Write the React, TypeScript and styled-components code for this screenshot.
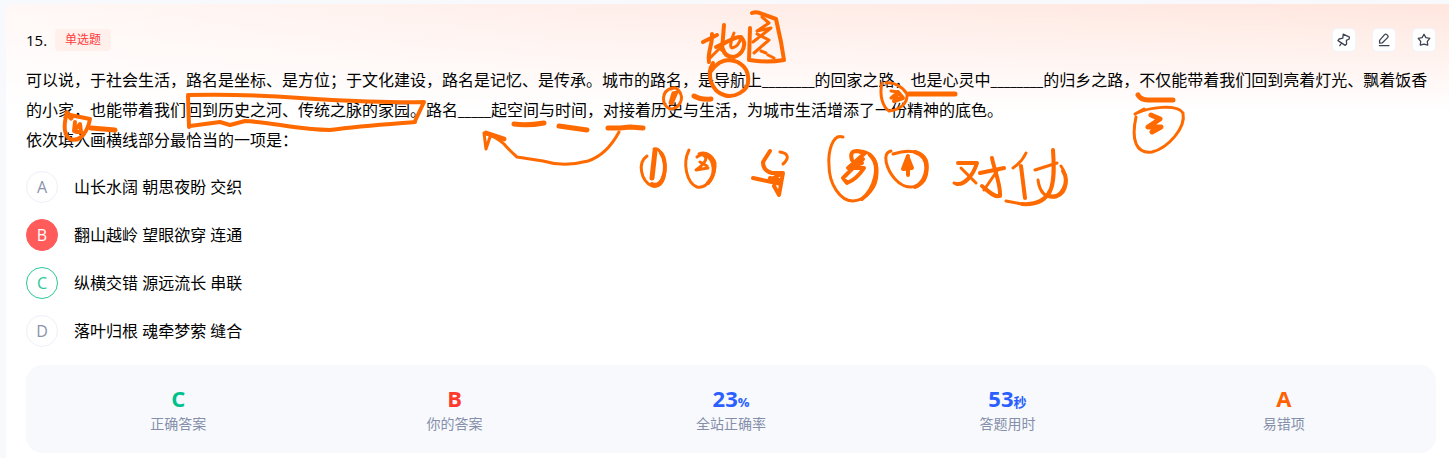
import React from "react";
import styled, { createGlobalStyle } from "styled-components";

const GlobalStyle = createGlobalStyle`
  * { box-sizing: border-box; }
  body {
    margin: 0;
    background: #f7f9fd;
    color: #000;
    font-family: "Open Sans", "Noto Sans CJK SC", sans-serif;
    font-size: 16px;
  }
`;

const Page = styled.div`
  position: relative;
  padding: 4px 0 0 6px;
`;

const Card = styled.main`
  min-height: calc(100vh - 4px);
  padding: 24px 13px 5px 20px;
  border-radius: 8px 0 0 0;
  background:
    linear-gradient(to bottom, rgba(255, 255, 255, 0) 0, #fff 108px),
    linear-gradient(to right, #fff8f6 0, #ffeeea 40%, #ffe6de 100%);
`;

const Header = styled.header`
  display: flex;
  align-items: center;
  height: 24px;
`;

const QuestionNumber = styled.span`
  font-size: 15px;
  line-height: 22px;
`;

const TypeTag = styled.span`
  margin-left: 8px;
  padding: 0 10px;
  border-radius: 4px;
  background: #fff0ec;
  color: #ff3b3b;
  font-size: 12px;
  line-height: 22px;
`;

const Tools = styled.div`
  display: flex;
  gap: 16px;
  margin-left: auto;
`;

const ToolButton = styled.button`
  display: grid;
  place-items: center;
  width: 24px;
  height: 24px;
  padding: 0;
  border: 1px solid #f1f3fb;
  border-radius: 5px;
  background: #fff;
  color: #3c4454;
  cursor: pointer;
`;

const Stem = styled.p`
  margin: 13px 0 16px;
  line-height: 30px;
`;

const Blank = styled.span`
  font-size: 15px;
  line-height: 1;
`;

const Options = styled.fieldset`
  display: flex;
  flex-direction: column;
  gap: 16px;
  margin: 0;
  padding: 0;
  border: 0;
`;

const Option = styled.label`
  display: flex;
  align-items: center;
  gap: 16px;
  height: 32px;
  cursor: pointer;
`;

const Radio = styled.input`
  position: absolute;
  opacity: 0;
  pointer-events: none;
`;

type OptionState = "idle" | "wrong" | "right";

const badgeColors = {
  idle: { line: "#edf0f8", fill: "#fff", text: "#8a93ad" },
  wrong: { line: "#ff5b5b", fill: "#ff5b5b", text: "#fff" },
  right: { line: "#2cc79b", fill: "#fff", text: "#2cc79b" },
};

const Badge = styled.span<{ $state: OptionState }>`
  display: grid;
  place-items: center;
  width: 32px;
  height: 32px;
  border: 1px solid ${(p) => badgeColors[p.$state].line};
  border-radius: 50%;
  background: ${(p) => badgeColors[p.$state].fill};
  color: ${(p) => badgeColors[p.$state].text};
  font-size: 16px;
  line-height: 30px;
`;

const OptionText = styled.span`
  line-height: 30px;
`;

const Stats = styled.dl`
  display: flex;
  margin: 18px 0 0;
  padding: 19px 14px 17px;
  border-radius: 16px;
  background: #f7f9fd;
`;

const Stat = styled.div`
  display: flex;
  flex: 1;
  flex-direction: column-reverse;
  align-items: center;
`;

const StatLabel = styled.dt`
  color: #868fa9;
  font-size: 14px;
  line-height: 24px;
`;

const StatValue = styled.dd<{ $color: string }>`
  margin: 0;
  color: ${(p) => p.$color};
  font-size: 22px;
  font-weight: 700;
  line-height: 28px;
`;

const Unit = styled.small`
  font-size: 13px;
  line-height: 1;
`;

const InkLayer = styled.svg`
  position: absolute;
  top: 0;
  left: 0;
  width: 100%;
  height: 100%;
  overflow: hidden;
  pointer-events: none;
  fill: none;
  stroke: #ff6a00;
  stroke-linecap: round;
  stroke-linejoin: round;
`;

const PinIcon = () => (
  <svg width="14" height="14" viewBox="0 0 14 14" fill="none" stroke="currentColor" strokeWidth="1.3" strokeLinejoin="round" strokeLinecap="round">
    <path d="M6.2 1.2 12.4 4.2 12.2 6 9.4 7.4 9.6 11 8.2 12.4 1 7.6 2 6 5.8 5.2Z M4.6 10 2.8 12.6" />
  </svg>
);

const EditIcon = () => (
  <svg width="14" height="14" viewBox="0 0 14 14" fill="none" stroke="currentColor" strokeWidth="1.3" strokeLinejoin="round" strokeLinecap="round">
    <path d="M2.6 7.4 7.6 1.6Q8.6.6 9.8 1.6L10.6 2.4Q11.6 3.4 10.6 4.6L5.4 9.8 2.6 10.2Z M2.4 12.6H12" />
  </svg>
);

const StarIcon = () => (
  <svg width="14" height="14" viewBox="0 0 14 14" fill="none" stroke="currentColor" strokeWidth="1.3" strokeLinejoin="round">
    <path d="M7 1.2 8.9 4.6 12.8 5.4 10.3 8.3 10.7 12.2 7 11.2 3.3 12.2 3.7 8.3 1.2 5.4 5.1 4.6Z" />
  </svg>
);

const options: { key: string; text: string; state: OptionState }[] = [
  { key: "A", text: "山长水阔 朝思夜盼 交织", state: "idle" },
  { key: "B", text: "翻山越岭 望眼欲穿 连通", state: "wrong" },
  { key: "C", text: "纵横交错 源远流长 串联", state: "right" },
  { key: "D", text: "落叶归根 魂牵梦萦 缝合", state: "idle" },
];

const stats = [
  { label: "正确答案", value: "C", unit: "", color: "#00c08b" },
  { label: "你的答案", value: "B", unit: "", color: "#ff3b30" },
  { label: "全站正确率", value: "23", unit: "%", color: "#2b5fff" },
  { label: "答题用时", value: "53", unit: "秒", color: "#2b5fff" },
  { label: "易错项", value: "A", unit: "", color: "#ff6200" },
];

/* Pen annotations, grouped by stroke thickness. */
const Annotations = () => (
  <InkLayer aria-hidden="true">
    <g strokeWidth="5">
      <path d="M514 124Q527 126 544 123 M559 126 587 130 M608 128H620L630 127 643 128" />
      <path d="M694 96Q701 100 711 99 M909 94H955 M1138 95Q1141 100 1148 100H1173" />
      <path d="M91 128 115 130 M67 113 71 118 M486 133 504 139" />
      <path d="M1151 115 1160 119 1148 127 1161 127 1152 132" />
      <path d="M655 151 652 178" />
    </g>
    <g strokeWidth="4">
      <path d="M188 95C230 94 260 95 300 98S400 103 424 102L415 121 M188 96 189 127 M415 122C390 124 360 126 330 130 300 130 270 122 245 121L230 125 220 122 190 126" />
      <path d="M67 113C64 123 63 134 70 139 81 143 88 130 90 119L70 115 M75 122 74 131 80 124 81 132 76 132" />
      <path d="M713 63C706 74 711 91 724 95 735 99 747 90 748 83 750 69 741 61 729 60 722 60 716 64 711 71" />
      <path d="M752 13Q757 11 762 14L776 19 781 42 784 60Q767 63 750 60 M750 28 749 60" />
      <path d="M703 42 717 35 M712 34C713 43 707 53 709 62 M724 25 722 50" />
      <path d="M716 47C726 43 735 36 741 37 747 43 744 54 734 57 728 57 724 54 723 49" />
      <path d="M908 156 903 169 912 168 908 158V175 M906 164 910 167" />
      <path d="M770 151 763 162Q763 171 772 173H783L779 195 774 186 M753 178 767 181 781 184 M768 181 781 174 M770 178 779 180" />
      <path d="M852 160Q849 151 857 151L865 153 848 168 864 168Q857 179 847 183L843 178 853 168 863 159 M853 166 862 163" />
      <path d="M1021 166 1025 198 M992 158C994 169 1001 185 1000 196 995 198 988 191 982 186" />
      <path d="M1053 150C1054 165 1055 184 1049 193 M958 163 977 163C973 176 964 185 957 184 M980 173 1004 168" />
      <path d="M661 153C669 163 664 190 652 184 M705 154C716 160 716 175 708 183 M870 155C882 166 874 190 862 199 M915 152C932 157 928 182 915 187" />
      <path d="M1050 191C1045 201 1036 205 1022 204 M1063 171C1070 182 1062 199 1050 196" />
      <path d="M896 97 898 92 903 98 894 101" />
    </g>
    <g strokeWidth="3">
      <path d="M762 17 769 23 757 31M757 31 771 28 753 42M757 34 769 40 754 53 M761 51 766 53 M768 55 774 58" />
      <path d="M734 33C730 42 730 48 732 48 737 47 740 42 741 37 M710 58 722 46" />
      <path d="M672 88C661 91 661 105 670 109 679 109 685 99 679 91 677 88 674 87 671 89 M670 103 673 93 677 92 672 104 675 96" />
      <path d="M882 83C879 96 883 107 889 111 900 110 908 103 907 94 903 87 894 82 886 83 M891 91 898 92 891 98 899 98 894 101" />
      <path d="M1135 114 1144 109 M1137 113C1148 108 1177 103 1183 113 1186 128 1168 148 1152 152 1136 154 1131 140 1136 117" />
      <path d="M619 132C611 147 600 157 588 161 569 166 556 165 543 161L517 157Q510 151 504 144 495 136 484 133L486 149 490 137" />
      <path d="M647 156C637 163 641 181 652 186 666 190 668 164 661 153Q658 148 654 149" />
      <path d="M689 150C682 164 687 183 697 187 708 189 716 174 715 163 713 156 706 151 699 154 M697 157Q703 152 706 158 706 163 696 170L708 168 M700 162 707 166" />
      <path d="M780 152C788 153 790 158 783 164" />
      <path d="M843 137C832 133 828 153 829 165 829 184 840 201 853 201 867 200 877 187 877 173 878 158 869 150 857 151" />
      <path d="M891 151C881 153 887 170 895 179 905 191 925 190 927 171 930 151 911 148 893 154" />
      <path d="M957 184 954 183 M961 168 976 183 M984 190 997 171" />
      <path d="M1026 153Q1022 162 1013 168 M1022 204 1006 201 M1035 170 1057 163 M1038 180C1040 195 1048 198 1056 197 1069 193 1068 176 1061 166" />
    </g>
  </InkLayer>
);

export default function App() {
  return (
    <Page>
      <GlobalStyle />
      <Card>
        <Header>
          <QuestionNumber>15.</QuestionNumber>
          <TypeTag>单选题</TypeTag>
          <Tools>
            <ToolButton type="button" aria-label="固定"><PinIcon /></ToolButton>
            <ToolButton type="button" aria-label="笔记"><EditIcon /></ToolButton>
            <ToolButton type="button" aria-label="收藏"><StarIcon /></ToolButton>
          </Tools>
        </Header>
        <Stem>
          可以说，于社会生活，路名是坐标、是方位；于文化建设，路名是记忆、是传承。城市的路名，是导航上<Blank>________</Blank>的回家之路，也是心灵中<Blank>________</Blank>的归乡之路，不仅能带着我们回到亮着灯光、飘着饭香的小家，也能带着我们回到历史之河、传统之脉的家园。路名<Blank>_____</Blank>起空间与时间，对接着历史与生活，为城市生活增添了一份精神的底色。
          <br />
          依次填入画横线部分最恰当的一项是：
        </Stem>
        <Options aria-label="选项">
          {options.map((o) => (
            <Option key={o.key}>
              <Radio type="radio" name="answer" value={o.key} defaultChecked={o.state === "wrong"} />
              <Badge $state={o.state}>{o.key}</Badge>
              <OptionText>{o.text}</OptionText>
            </Option>
          ))}
        </Options>
        <Stats>
          {stats.map((s) => (
            <Stat key={s.label}>
              <StatLabel>{s.label}</StatLabel>
              <StatValue $color={s.color}>
                {s.value}
                {s.unit && <Unit>{s.unit}</Unit>}
              </StatValue>
            </Stat>
          ))}
        </Stats>
      </Card>
      <Annotations />
    </Page>
  );
}
